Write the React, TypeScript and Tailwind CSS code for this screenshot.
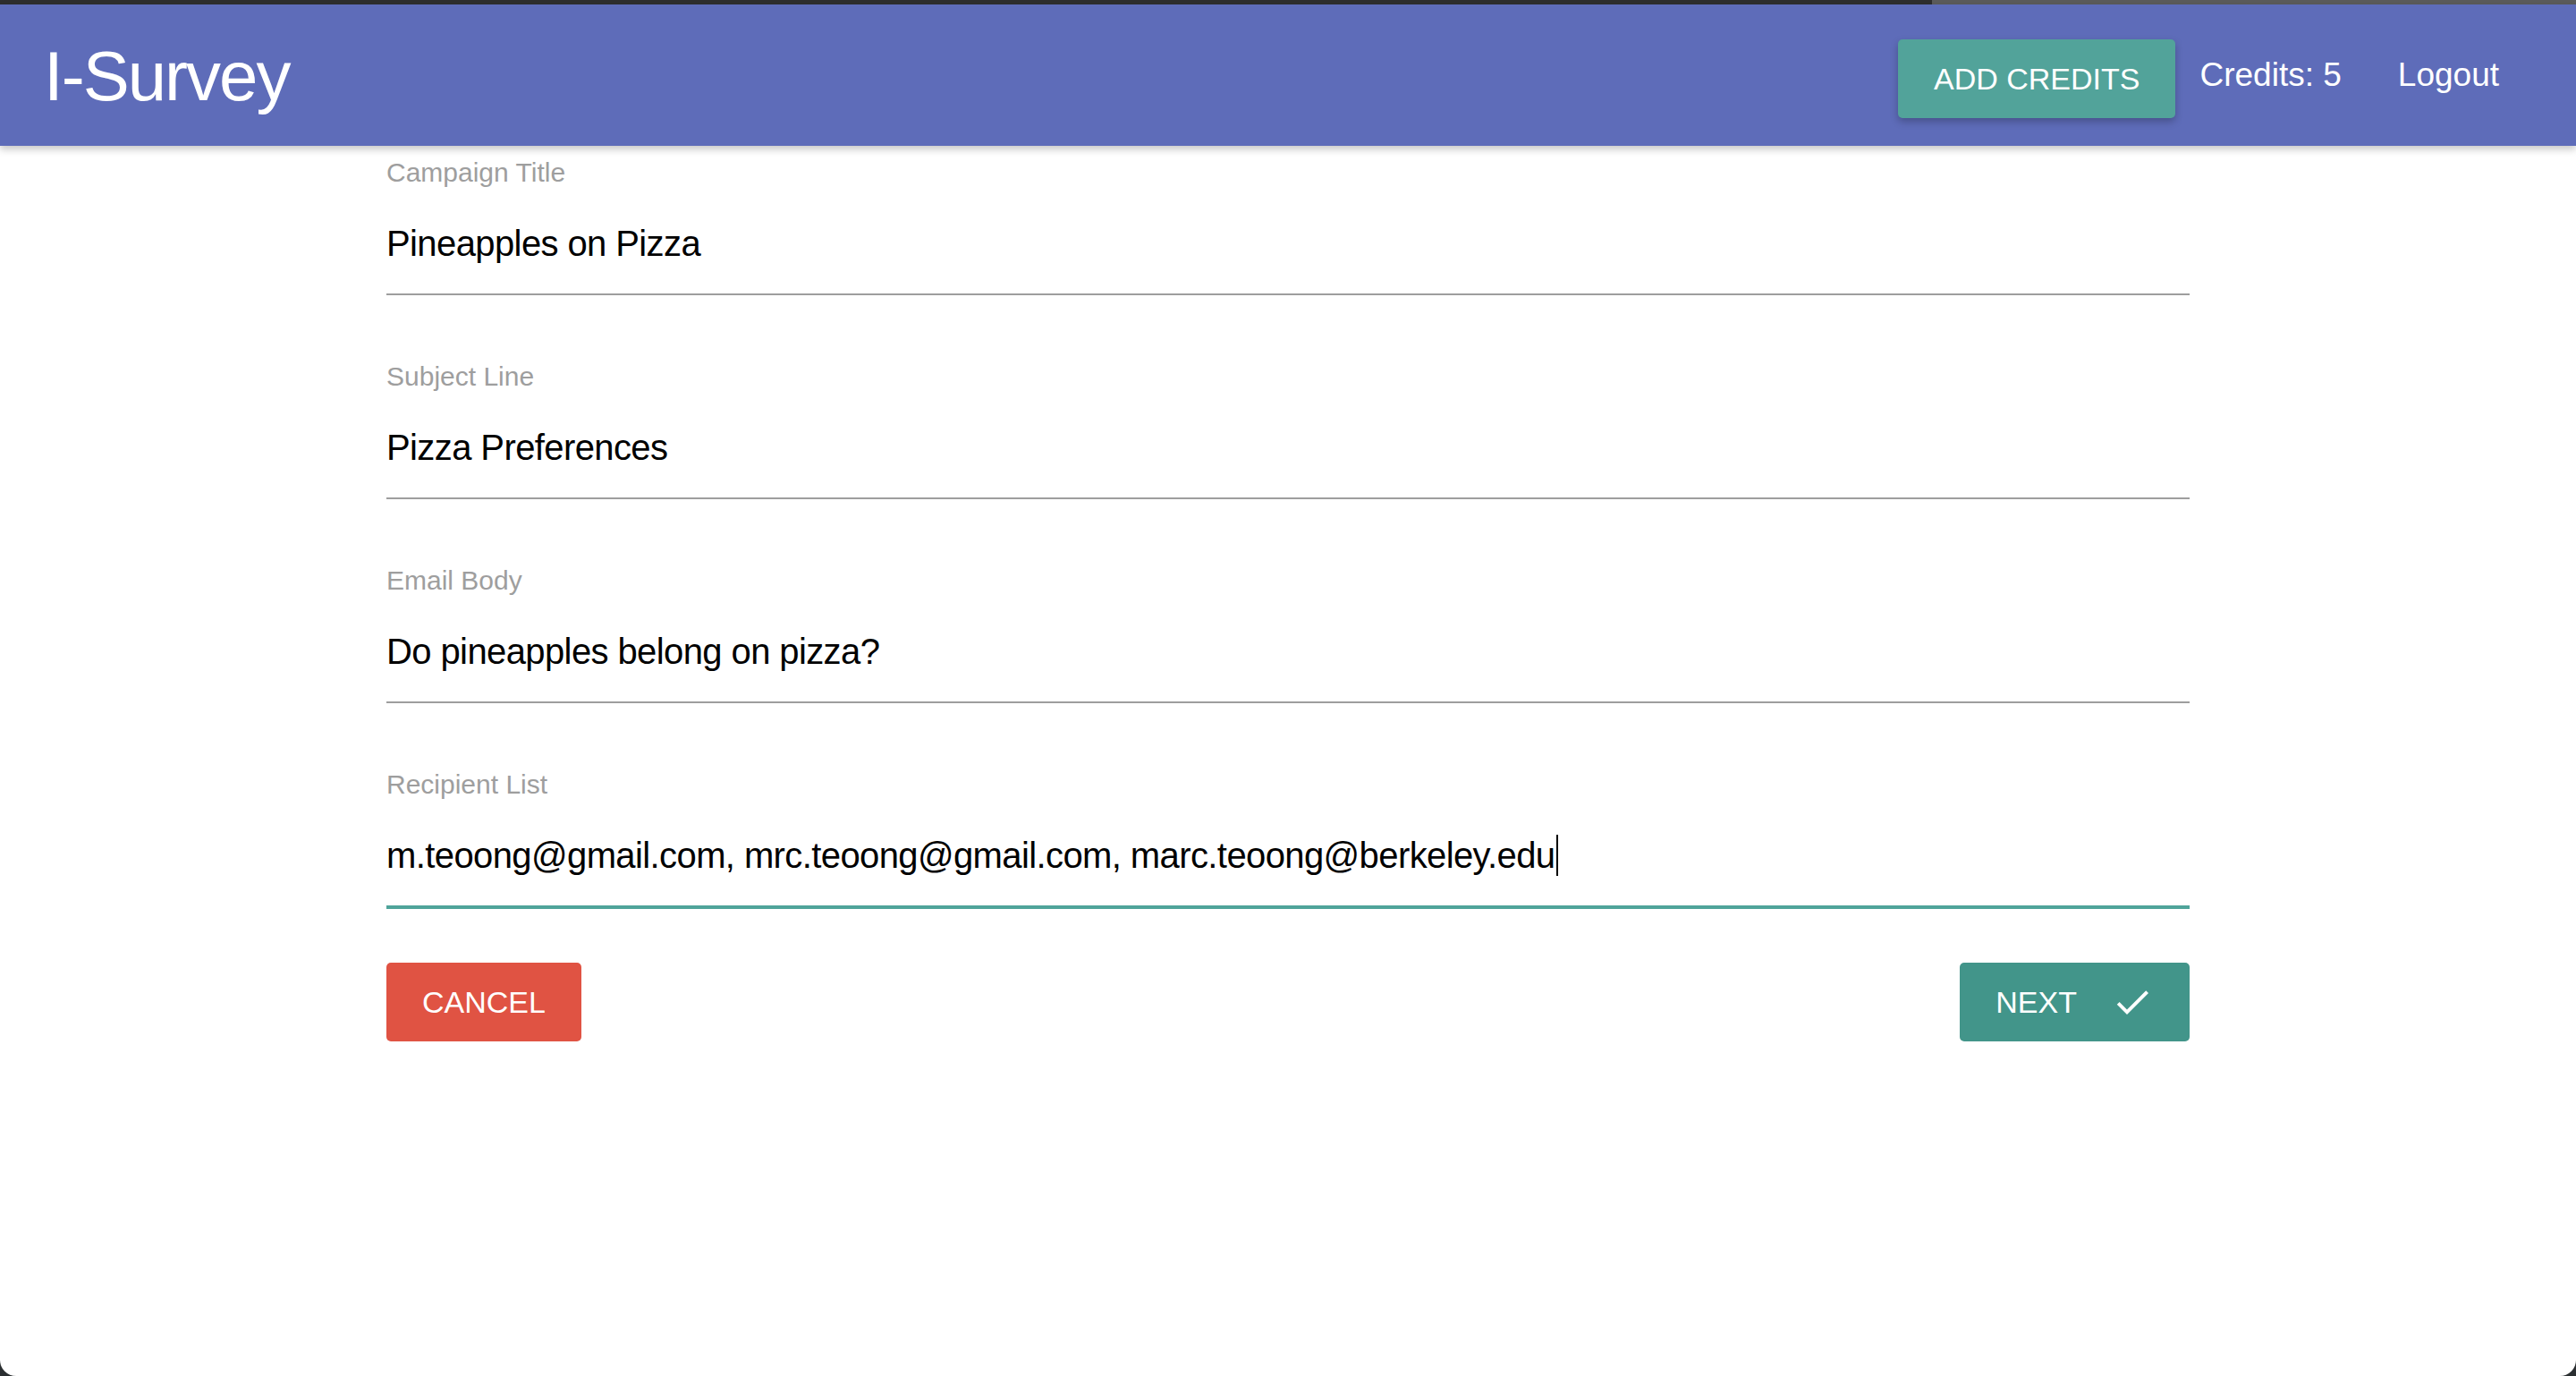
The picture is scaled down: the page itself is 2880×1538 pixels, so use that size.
import React from "react";

const fields = [
  { label: "Campaign Title", value: "Pineapples on Pizza" },
  { label: "Subject Line", value: "Pizza Preferences" },
  { label: "Email Body", value: "Do pineapples belong on pizza?" },
];

const Field = ({ label, value, active }: any) => {
  return (
    <div className={active ? "mb-[62px]" : "mb-[76px]"}>
      <label className="block text-[30px] leading-[30px] text-[#9e9e9e]">{label}</label>
      {active ? (
        <div className="h-[122px] pt-[8px] flex items-center border-b-2 border-[#4fa49a] shadow-[0_2px_0_0_#4fa49a] text-[40px] tracking-[-0.6px] text-black">
          <span>{value}</span>
          <span className="inline-block w-[2px] h-[46px] bg-black ml-[1px]"></span>
        </div>
      ) : (
        <div className="h-[122px] pt-[8px] flex items-center border-b-2 border-[#9e9e9e] text-[40px] tracking-[-0.6px] text-black">
          {value}
        </div>
      )}
    </div>
  );
};

const CheckIcon = () => (
  <svg width="48" height="48" viewBox="0 0 24 24" fill="white">
    <path d="M9 16.2 4.8 12l-1.4 1.4L9 19 21 7l-1.4-1.4L9 16.2z" />
  </svg>
);

export default function App() {
  return (
    <div
      className="h-[1538px] flex flex-col bg-[#2b2f31]"
      style={{ fontFamily: '"Liberation Sans", Arial, sans-serif' }}
    >
      <div className="flex-1 flex flex-col bg-white rounded-b-[18px] overflow-hidden">
        {/* top strip */}
        <div className="flex h-[5px]">
          <div className="w-[2160px] bg-[#2e2e2e]"></div>
          <div className="flex-1 bg-[#5b5b5b]"></div>
        </div>

        {/* nav */}
        <nav className="relative z-10 h-[158px] bg-[#5e6cb9] flex items-center justify-between shadow-[0_4px_8px_rgba(0,0,0,0.22)]">
          <div className="pl-[49px] text-white text-[78px] tracking-[-2px] leading-none pt-[2px]">I-Survey</div>
          <div className="flex items-center pr-[86px] text-white">
            <button className="h-[88px] px-[40px] mt-[8px] rounded-[5px] bg-[#52a39a] text-[34px] uppercase shadow-[0_4px_8px_rgba(0,0,0,0.25)]">
              Add Credits
            </button>
            <div className="ml-[27px] text-[37px]">Credits: 5</div>
            <div className="ml-[63px] text-[37px]">Logout</div>
          </div>
        </nav>

        {/* form */}
        <div className="w-[70%] mx-auto pt-[15px]">
          {fields.map((f) => (
            <Field key={f.label} label={f.label} value={f.value} />
          ))}
          <Field
            label="Recipient List"
            value="m.teoong@gmail.com, mrc.teoong@gmail.com, marc.teoong@berkeley.edu"
            active
          />
          <div className="flex justify-between">
            <button className="h-[88px] px-[40px] rounded-[5px] bg-[#e05343] text-white text-[34px] uppercase">
              Cancel
            </button>
            <button className="h-[88px] pl-[40px] pr-[40px] rounded-[5px] bg-[#42958a] text-white text-[34px] uppercase flex items-center">
              Next
              <span className="ml-[38px] flex">
                <CheckIcon />
              </span>
            </button>
          </div>
        </div>
      </div>
    </div>
  );
}
